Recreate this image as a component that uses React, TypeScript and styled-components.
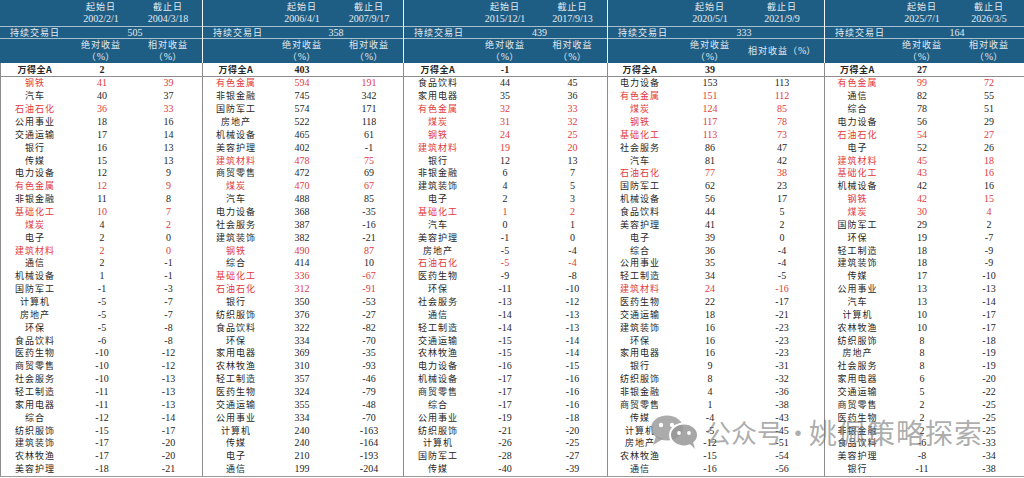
import React from "react";
import styled, { createGlobalStyle } from "styled-components";

const GlobalStyle = createGlobalStyle`
  html, body {
    margin: 0;
    padding: 0;
    background: #ffffff;
  }
  body {
    font-family: "Liberation Serif", "Noto Sans CJK SC", serif;
    color: #222;
  }
`;

// resource / cyclical sectors are marked red in every period
const RED = new Set(["有色金属", "煤炭", "钢铁", "建筑材料", "基础化工", "石油石化"]);

type Period = {
  start: string;
  end: string;
  days: number;
  market: number;
  width: number;
  cols: string;
  oneLineRel?: boolean;
  rows: string;
};

const periods: Period[] = [
  {
    start: "2002/2/1",
    end: "2004/3/18",
    days: 505,
    market: 2,
    width: 203,
    cols: "68px 66px 1fr",
    rows:
      "钢铁 41 39|汽车 40 37|石油石化 36 33|公用事业 18 16|交通运输 17 14|银行 16 13|传媒 15 13|电力设备 12 9|有色金属 12 9|非银金融 11 8|基础化工 10 7|煤炭 4 2 *|电子 2 0|建筑材料 2 0|通信 2 -1|机械设备 1 -1|国防军工 -1 -3|计算机 -5 -7|房地产 -5 -7|环保 -5 -8|食品饮料 -6 -8|医药生物 -10 -12|商贸零售 -10 -12|社会服务 -10 -13|轻工制造 -11 -13|家用电器 -11 -13|综合 -12 -14|纺织服饰 -15 -17|建筑装饰 -17 -20|农林牧渔 -17 -20|美容护理 -18 -21",
  },
  {
    start: "2006/4/1",
    end: "2007/9/17",
    days: 358,
    market: 403,
    width: 201,
    cols: "66px 66px 1fr",
    rows:
      "有色金属 594 191|非银金融 745 342|国防军工 574 171|房地产 522 118|机械设备 465 61|美容护理 402 -1|建筑材料 478 75|商贸零售 472 69|煤炭 470 67|汽车 488 85|电力设备 368 -35|社会服务 387 -16|建筑装饰 382 -21|钢铁 490 87|综合 414 10|基础化工 336 -67|石油石化 312 -91|银行 350 -53|纺织服饰 376 -27|食品饮料 322 -82|环保 334 -70|家用电器 369 -35|农林牧渔 310 -93|轻工制造 357 -46|医药生物 324 -79|交通运输 355 -48|公用事业 334 -70|计算机 240 -163|传媒 240 -164|电子 210 -193|通信 199 -204",
  },
  {
    start: "2015/12/1",
    end: "2017/9/13",
    days: 439,
    market: -1,
    width: 204,
    cols: "68px 66px 1fr",
    rows:
      "食品饮料 44 45|家用电器 35 36|有色金属 32 33|煤炭 31 32|钢铁 24 25|建筑材料 19 20|银行 12 13|非银金融 6 7|建筑装饰 4 5|电子 2 3|基础化工 1 2|汽车 0 1|美容护理 -1 0|房地产 -5 -4|石油石化 -5 -4|医药生物 -9 -8|环保 -11 -10|社会服务 -13 -12|通信 -14 -13|轻工制造 -14 -13|交通运输 -15 -14|农林牧渔 -15 -14|电力设备 -16 -15|机械设备 -17 -16|商贸零售 -17 -16|综合 -17 -16|公用事业 -19 -18|纺织服饰 -21 -20|计算机 -26 -25|国防军工 -28 -27|传媒 -40 -39",
  },
  {
    start: "2020/5/1",
    end: "2021/9/9",
    days: 333,
    market: 39,
    width: 217,
    cols: "64px 76px 68px 1fr",
    oneLineRel: true,
    rows:
      "电力设备 153 113|有色金属 151 112|煤炭 124 85|钢铁 117 78|基础化工 113 73|社会服务 86 47|汽车 81 42|石油石化 77 38|国防军工 62 23|机械设备 56 17|食品饮料 44 5|美容护理 41 2|电子 39 0|综合 36 -4|公用事业 35 -4|轻工制造 34 -5|建筑材料 24 -16|医药生物 22 -17|交通运输 18 -21|建筑装饰 16 -23|环保 16 -23|家用电器 16 -23|银行 9 -31|纺织服饰 8 -32|非银金融 4 -36|商贸零售 1 -38|传媒 -4 -43|计算机 -5 -45|房地产 -12 -51|农林牧渔 -15 -54|通信 -16 -56",
  },
  {
    start: "2025/7/1",
    end: "2026/3/5",
    days: 164,
    market: 27,
    width: 199,
    cols: "65px 64px 1fr",
    rows:
      "有色金属 99 72|通信 82 55|综合 78 51|电力设备 56 29|石油石化 54 27|电子 52 26|建筑材料 45 18|基础化工 43 16|机械设备 42 16|钢铁 42 15|煤炭 30 4|国防军工 29 2|环保 19 -7|轻工制造 18 -9|建筑装饰 18 -9|传媒 17 -10|公用事业 13 -13|汽车 13 -14|计算机 10 -17|农林牧渔 10 -17|纺织服饰 8 -18|房地产 8 -19|社会服务 8 -19|家用电器 6 -20|交通运输 5 -22|商贸零售 2 -25|医药生物 2 -25|非银金融 2 -25|食品饮料 -6 -33|美容护理 -8 -34|银行 -11 -38",
  },
];

const Page = styled.div`
  position: relative;
  width: 1024px;
  height: 478px;
  overflow: hidden;
`;

const Board = styled.div`
  display: flex;
`;

const Panel = styled.div<{ $w: number }>`
  width: ${(p) => p.$w}px;
  flex: none;
  display: flex;
  flex-direction: column;
`;

const Head = styled.div<{ $last: boolean }>`
  background: #1f5e84;
  color: #e3ebf1;
  border-right: ${(p) => (p.$last ? "none" : "1px solid #f4f7f9")};
`;

const HeadRow = styled.div<{ $cols: string; $h: number; $line?: boolean }>`
  display: grid;
  grid-template-columns: ${(p) => p.$cols};
  height: ${(p) => p.$h}px;
  align-items: center;
  border-bottom: ${(p) => (p.$line ? "1px solid rgba(210, 225, 235, 0.75)" : "none")};
  box-sizing: content-box;
`;

const HeadCell = styled.div<{ $span?: boolean; $left?: boolean }>`
  grid-column: ${(p) => (p.$span ? "2 / 4" : "auto")};
  text-align: ${(p) => (p.$left ? "left" : "center")};
  padding-left: ${(p) => (p.$left ? "10px" : "0")};
  font-size: 9px;
  line-height: 12px;
  letter-spacing: 1px;
  white-space: nowrap;
`;

const Num = styled.span`
  font-family: "Liberation Serif", serif;
  font-size: 10px;
  letter-spacing: 0;
`;

const Body = styled.div<{ $first: boolean; $last: boolean }>`
  border-left: ${(p) => (p.$first ? "1px solid #8c8c8c" : "none")};
  border-right: ${(p) => (p.$last ? "none" : "1px solid #8c8c8c")};
  border-bottom: 1px solid #9a9a9a;
`;

const MarketRow = styled.div<{ $cols: string }>`
  display: grid;
  grid-template-columns: ${(p) => p.$cols};
  height: 13px;
  align-items: center;
  border-bottom: 1px solid #8c8c8c;
  font-weight: bold;
`;

const Row = styled.div<{ $cols: string }>`
  display: grid;
  grid-template-columns: ${(p) => p.$cols};
  height: 12.86px;
  align-items: center;
`;

const Name = styled.div<{ $red?: boolean }>`
  text-align: center;
  font-family: "Noto Sans CJK SC", "Liberation Serif", serif;
  font-size: 9px;
  letter-spacing: 1px;
  line-height: 12px;
  color: ${(p) => (p.$red ? "#e23a3c" : "#262626")};
  white-space: nowrap;
`;

const Value = styled.div<{ $red?: boolean }>`
  text-align: center;
  font-family: "Liberation Serif", serif;
  font-size: 10px;
  line-height: 12px;
  color: ${(p) => (p.$red ? "#e23a3c" : "#262626")};
`;

const MarketName = styled(Name)`
  font-weight: bold;
  letter-spacing: 0.5px;
`;

const Watermark = styled.div`
  position: absolute;
  left: 649px;
  top: 414px;
  display: flex;
  align-items: center;
  gap: 4px;
  color: rgba(120, 120, 120, 0.62);
  font-family: "Noto Sans CJK SC", sans-serif;
  pointer-events: none;
`;

const MarkText = styled.span`
  font-size: 26px;
  line-height: 36px;
  letter-spacing: 0px;
`;

const MarkDot = styled.span`
  font-size: 26px;
  line-height: 36px;
  margin: 0 -6px 0 -2px;
`;

const MarkName = styled.span`
  font-size: 28px;
  line-height: 36px;
  letter-spacing: 1px;
`;

const WeChat = () => (
  <svg width="52" height="34" viewBox="0 0 52 34">
    <g fill="rgba(150,150,150,0.8)">
      <ellipse cx="18" cy="13" rx="16" ry="12.5" />
      <path d="M7 21 L4 30 L14 24 Z" />
    </g>
    <circle cx="12" cy="10" r="2.2" fill="#fff" />
    <circle cx="23" cy="10" r="2.2" fill="#fff" />
    <g fill="rgba(150,150,150,0.85)" stroke="#fff" strokeWidth="2">
      <ellipse cx="35" cy="20" rx="14" ry="11.5" />
    </g>
    <path d="M41 29 L46 34 L44 27 Z" fill="rgba(150,150,150,0.85)" />
    <circle cx="30" cy="18" r="1.9" fill="#fff" />
    <circle cx="40" cy="18" r="1.9" fill="#fff" />
  </svg>
);

const parse = (rows: string) =>
  rows.split("|").map((r) => {
    const [name, abs, rel, flag] = r.split(" ");
    return { name, abs, rel, keepAbs: flag === "*" };
  });

const PeriodPanel: React.FC<{ p: Period; first: boolean; last: boolean }> = ({ p, first, last }) => (
  <Panel $w={p.width}>
    <Head $last={last}>
      <HeadRow $cols={p.cols} $h={26} $line>
        <div />
        <HeadCell>
          起始日
          <br />
          <Num>{p.start}</Num>
        </HeadCell>
        <HeadCell>
          截止日
          <br />
          <Num>{p.end}</Num>
        </HeadCell>
      </HeadRow>
      <HeadRow $cols={p.cols} $h={11} $line>
        <HeadCell $left>持续交易日</HeadCell>
        <HeadCell $span>
          <Num>{p.days}</Num>
        </HeadCell>
      </HeadRow>
      <HeadRow $cols={p.cols} $h={24}>
        <div />
        <HeadCell>
          绝对收益
          <br />（<Num>%</Num>）
        </HeadCell>
        {p.oneLineRel ? (
          <HeadCell>
            相对收益（<Num>%</Num>）
          </HeadCell>
        ) : (
          <HeadCell>
            相对收益
            <br />（<Num>%</Num>）
          </HeadCell>
        )}
      </HeadRow>
    </Head>
    <Body $first={first} $last={last}>
      <MarketRow $cols={p.cols}>
        <MarketName>万得全A</MarketName>
        <Value>{p.market}</Value>
        <div />
      </MarketRow>
      {parse(p.rows).map((r) => {
        const red = RED.has(r.name);
        return (
          <Row key={r.name} $cols={p.cols}>
            <Name $red={red}>{r.name}</Name>
            <Value $red={red && !r.keepAbs}>{r.abs}</Value>
            <Value $red={red}>{r.rel}</Value>
          </Row>
        );
      })}
    </Body>
  </Panel>
);

export default function App() {
  return (
    <>
      <GlobalStyle />
      <Page>
        <Board>
          {periods.map((p, i) => (
            <PeriodPanel key={p.start} p={p} first={i === 0} last={i === periods.length - 1} />
          ))}
        </Board>
        <Watermark>
          <WeChat />
          <MarkText>公众号</MarkText>
          <MarkDot>·</MarkDot>
          <MarkName>姚佩策略探索</MarkName>
        </Watermark>
      </Page>
    </>
  );
}
